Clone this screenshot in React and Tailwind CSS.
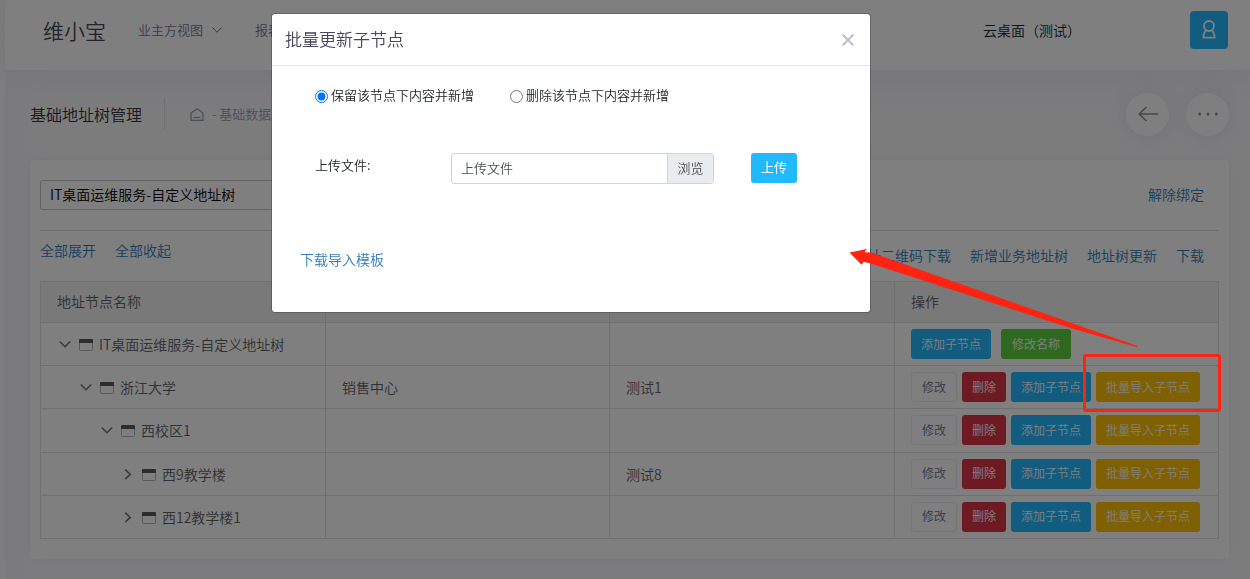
const rows = [
  { level: 0, open: true, name: 'IT桌面运维服务-自定义地址树', col2: '', col3: '' },
  { level: 1, open: true, name: '浙江大学', col2: '销售中心', col3: '测试1' },
  { level: 2, open: true, name: '西校区1', col2: '', col3: '' },
  { level: 3, open: false, name: '西9教学楼', col2: '', col3: '测试8' },
  { level: 3, open: false, name: '西12教学楼1', col2: '', col3: '' },
];

const indents = ['pl-0', 'pl-[21px]', 'pl-[42px]', 'pl-[63px]'];
const btn = 'h-[30px] shrink-0 rounded-[3px] pb-px text-xs whitespace-nowrap';

function Chevron({ open }) {
  return (
    <svg className="size-3 shrink-0" viewBox="0 0 12 12" fill="none" stroke="#777" strokeWidth="1.6" aria-hidden="true">
      <path d={open ? 'M.8 3.500l5.200 5.200 5.200-5.200' : 'M3.2 1.700L8.200 6.400l-5 4.700'} />
    </svg>
  );
}

function WindowIcon() {
  return (
    <svg className="ml-2 h-3.5 w-3.5 shrink-0" viewBox="0 -2 14 14" fill="none" aria-hidden="true">
      <rect x=".5" y=".5" width="13" height="11" rx=".8" stroke="#b4b4b4" />
      <path d="M1 0h12a1 1 0 0 1 1 1v3H0V1a1 1 0 0 1 1-1z" fill="#5a5a5a" />
    </svg>
  );
}

function Header() {
  return (
    <header className="flex h-[70px] items-center bg-white pr-[22px] pb-[11px] pl-[38px] shadow-[0_0_40px_rgba(82,63,105,0.1)]">
      <h1 className="text-[21px] leading-8 text-[#48465b]">维小宝</h1>
      <nav className="ml-8 flex items-center text-[13px] text-[#74788d]">
        <button type="button" className="flex items-center">
          业主方视图
          <svg className="ml-[9px] h-[6px] w-2.5" viewBox="0 0 10 6" fill="none" stroke="currentColor" aria-hidden="true">
            <path d="M.4.6L5 5.2 9.6.6" />
          </svg>
        </button>
        <a href="#reports" className="ml-[33px]">报表</a>
      </nav>
      <span className="ml-auto text-sm text-[#222]">云桌面（测试）</span>
      <button type="button" aria-label="用户" className="ml-[109px] flex size-[38px] items-center justify-center rounded bg-[#22b9ff]">
        <svg className="h-[19px] w-[15px]" viewBox="0 0 15 19" fill="none" stroke="#fff" strokeWidth="1.8" aria-hidden="true">
          <circle cx="7" cy="6" r="5" />
          <path d="M4.300 10.200C2.200 11.800 1.600 14 1.400 17.600h11.200c-.2-3.600-.8-5.800-2.900-7.400" />
        </svg>
      </button>
    </header>
  );
}

function SubHeader() {
  const circle = 'flex size-[43px] items-center justify-center rounded-full bg-white shadow-[0_0_20px_rgba(82,63,105,0.12)]';
  return (
    <div className="flex h-[90px] items-center pr-[21px] pb-0.5 pl-[25px]">
      <h2 className="text-base text-[#333]">基础地址树管理</h2>
      <span className="ml-[22px] h-8 w-px bg-[#dedfeb]" />
      <nav className="ml-[25px] flex items-center text-[13px] text-[#959cb6]">
        <a href="#home" aria-label="首页">
          <svg className="h-[13px] w-3.5" viewBox="0 0 14 13" fill="none" stroke="currentColor" aria-hidden="true">
            <path d="M1 12.300V5L7 .7 13 5v7.300zM3.500 9.500h7" strokeWidth="1.200" />
          </svg>
        </a>
        <span className="ml-2">- 基础数据</span>
      </nav>
      <div className="ml-auto flex gap-[17px]">
        <button type="button" aria-label="返回" className={circle}>
          <svg className="h-4 w-5" viewBox="0 0 20 16" fill="none" stroke="#8f9099" strokeWidth="1.600" aria-hidden="true">
            <path d="M20 8H1.500M8.500 1L1.200 8l7.300 7" />
          </svg>
        </button>
        <button type="button" aria-label="更多" className={circle}>
          <svg className="h-1 w-5" viewBox="0 0 20 4" fill="#8f9099" aria-hidden="true">
            <circle cx="1.700" cy="2" r="1.500" />
            <circle cx="10" cy="2" r="1.500" />
            <circle cx="18.300" cy="2" r="1.500" />
          </svg>
        </button>
      </div>
    </div>
  );
}

function Actions({ root }) {
  if (root) {
    return (
      <div className="flex gap-2.5">
        <button type="button" className={`${btn} bg-[#22b9ff] px-2.5 text-white`}>添加子节点</button>
        <button type="button" className={`${btn} bg-[#5dd23f] px-[11px] text-white`}>修改名称</button>
      </div>
    );
  }
  return (
    <div className="flex gap-[5px]">
      <button type="button" className={`${btn} border border-[#ebedf8] px-2.5 text-[#6c7293]`}>修改</button>
      <button type="button" className={`${btn} bg-[#dc3545] px-2.5 text-white`}>删除</button>
      <button type="button" className={`${btn} bg-[#22b9ff] px-2.5 text-white`}>添加子节点</button>
      <button type="button" className={`${btn} bg-[#ffc107] px-2.5 text-white`}>批量导入子节点</button>
    </div>
  );
}

function AddressTable() {
  return (
    <table className="h-[258px] w-full table-fixed border-collapse text-left text-sm text-[#606266] [&_td]:border [&_td]:border-[#e0e0e0] [&_td]:px-4 [&_th]:border [&_th]:border-[#e0e0e0] [&_th]:px-4 [&_th]:pb-0.5 [&_th]:font-[350]">
      <colgroup>
        <col className="w-[285px]" />
        <col className="w-[284px]" />
        <col className="w-[285px]" />
        <col />
      </colgroup>
      <thead>
        <tr className="h-[41px] bg-[#f2f2f2]">
          <th>地址节点名称</th>
          <th></th>
          <th></th>
          <th>操作</th>
        </tr>
      </thead>
      <tbody>
        {rows.map((row) => (
          <tr key={row.name} className="h-[43px]">
            <td>
              <div className={`flex items-center ${indents[row.level]}`}>
                <button type="button" aria-label={row.open ? '收起' : '展开'} className="ml-0.5">
                  <Chevron open={row.open} />
                </button>
                <WindowIcon />
                <span className="ml-1.5 whitespace-nowrap">{row.name}</span>
              </div>
            </td>
            <td>{row.col2}</td>
            <td>{row.col3}</td>
            <td><Actions root={row.level === 0} /></td>
          </tr>
        ))}
      </tbody>
    </table>
  );
}

function UploadDialog() {
  return (
    <div className="fixed inset-0 z-10 bg-black/50 pt-[13px] pl-[271px]">
      <div role="dialog" aria-modal="true" aria-labelledby="dialog-title" className="w-[600px] rounded border border-black/20 bg-white bg-clip-padding">
        <div className="flex h-[52px] items-center justify-between border-b border-[#e1e2e6] pr-4 pl-[13px]">
          <h3 id="dialog-title" className="pb-0.5 text-[17px] leading-6 text-[#48465b]">批量更新子节点</h3>
          <button type="button" aria-label="关闭">
            <svg className="size-3" viewBox="0 0 12 12" fill="none" stroke="#b5b6c6" strokeWidth="1.700" aria-hidden="true">
              <path d="M.7.7l10.600 10.600M11.300.7L.7 11.300" />
            </svg>
          </button>
        </div>
        <form className="pt-5 pr-7 pb-[43px] pl-7 text-[13px] text-[#212529]" onSubmit={(e) => e.preventDefault()}>
          <div className="flex h-5 items-center gap-9 pl-[15px]">
            <label className="flex items-center gap-[3px]">
              <input type="radio" name="mode" defaultChecked className="size-[13px] accent-[#0075ff]" />
              <span className="pb-0.5">保留该节点下内容并新增</span>
            </label>
            <label className="flex items-center gap-[3px]">
              <input type="radio" name="mode" className="size-[13px] accent-[#0075ff]" />
              <span className="pb-0.5">删除该节点下内容并新增</span>
            </label>
          </div>
          <div className="mt-[47px] flex items-start pl-[15px]">
            <label htmlFor="file-name" className="w-[136px] pt-0.5 leading-5">上传文件:</label>
            <div className="flex h-[31px] w-[263px] rounded-[3px] border border-[#ced4da]">
              <input id="file-name" type="text" placeholder="上传文件" className="min-w-0 flex-1 px-[9px] pb-0.5 placeholder:text-[#495057]" />
              <button type="button" className="w-[46px] border-l border-[#ced4da] bg-[#e9ecef] pb-0.5 text-[#495057]">浏览</button>
            </div>
            <button type="submit" className="ml-[37px] h-[30px] w-[46px] rounded-[3px] bg-[#22b9ff] pb-0.5 font-normal text-white">上传</button>
          </div>
          <a href="#template" className="mt-[65px] block w-fit text-sm leading-5 text-[#337ab7]">下载导入模板</a>
        </form>
      </div>
    </div>
  );
}

function Annotation() {
  return (
    <svg className="pointer-events-none absolute top-[248px] left-[849px] z-20 h-[166px] w-[374px]" viewBox="849 248 374 166" aria-hidden="true">
      <path d="M849.500 252.500L867 249l-2.500 3.200 6.500.3L1073 323.500l64.500 22.500-.5 1.200-66-19L870.500 263.500l-7-1.800-2 3z" fill="#ff2312" />
      <rect x="1084.500" y="355.500" width="135" height="55" rx="1.500" fill="none" stroke="#ff2312" strokeWidth="3" />
    </svg>
  );
}

export default function App() {
  return (
    <div className="relative flex min-h-screen bg-[#f8f8fb] font-['Noto_Sans_CJK_SC',sans-serif] font-[350]">
      <aside className="w-[5px] shrink-0 bg-[#fcfcfd] shadow-[0_0_28px_rgba(82,63,105,0.13)]" />
      <div className="min-w-0 flex-1">
        <Header />
        <SubHeader />
        <main className="mr-[21px] mb-5 ml-[25px] rounded bg-white px-2.5 py-5 shadow-[0_0_13px_rgba(82,63,105,0.05)]">
          <div className="flex items-center justify-between border-b border-[#dadada] pb-5">
            <input aria-label="地址树" defaultValue="IT桌面运维服务-自定义地址树" className="h-[30px] w-[300px] rounded-[3px] border border-[#c4c4c4] px-[9px] pb-0.5 text-sm text-black" />
            <a href="#unbind" className="mr-[15px] pb-0.5 text-sm text-[#337ab7]">解除绑定</a>
          </div>
          <div className="flex h-[50px] items-start justify-between text-sm leading-5 text-[#337ab7]">
            <div className="flex gap-[19px] pt-[9px]">
              <a href="#expand">全部展开</a>
              <a href="#collapse">全部收起</a>
            </div>
            <div className="flex gap-[19px] pt-3.5 pr-[15px]">
              <a href="#qr">地址二维码下载</a>
              <a href="#new">新增业务地址树</a>
              <a href="#update">地址树更新</a>
              <a href="#download">下载</a>
            </div>
          </div>
          <AddressTable />
        </main>
      </div>
      <UploadDialog />
      <Annotation />
    </div>
  );
}
